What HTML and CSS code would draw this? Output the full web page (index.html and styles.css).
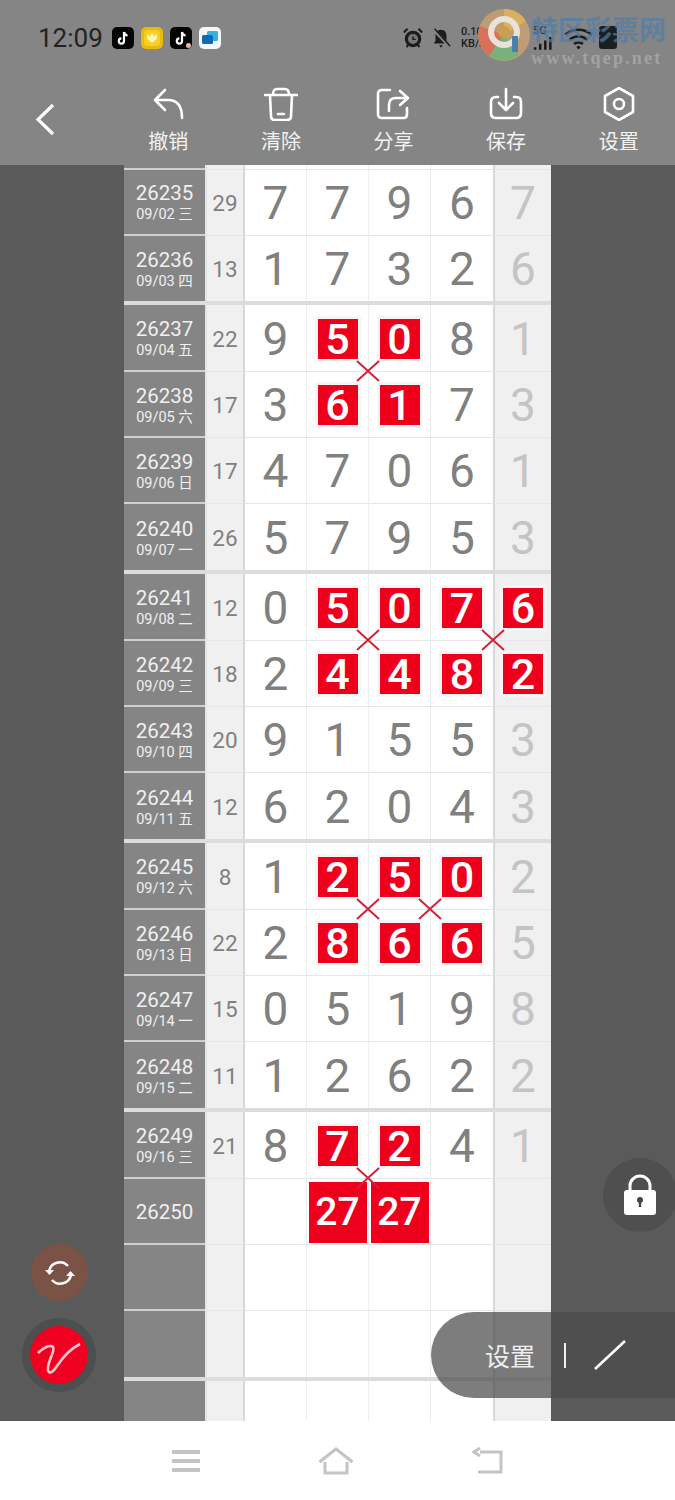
FILE: index.html
```html
<!DOCTYPE html>
<html lang="zh-CN">
<head>
    <meta charset="UTF-8">
    <meta name="viewport" content="width=device-width, initial-scale=1.0">
    <title>排列五</title>
    <link rel="stylesheet" href="styles.css">
</head>
<body>
    <header class="top">
        <div class="status">
            <span class="time">12:09</span>
            <div class="apps">
                <svg class="app" viewBox="0 0 22 22"><rect width="22" height="22" rx="5" fill="#050505"/><path d="M12 5v9a2.600 2.600 0 1 1-2.600-2.600M12 5c.3 2 1.600 3.300 3.600 3.500" fill="none" stroke="#fff" stroke-width="2.200"/></svg>
                <svg class="app" viewBox="0 0 22 22"><rect width="22" height="22" rx="5" fill="#e8b90f"/><rect x="3" y="3" width="16" height="16" rx="4" fill="#f5d020"/><path d="M6 7l2.500 2L11 6l2.500 3L16 7v5l-5 4-5-4z" fill="#fff3b0"/></svg>
                <svg class="app" viewBox="0 0 22 22"><rect width="22" height="22" rx="5" fill="#050505"/><path d="M12 5v9a2.600 2.600 0 1 1-2.600-2.600M12 5c.3 2 1.600 3.300 3.600 3.500" fill="none" stroke="#fff" stroke-width="2.200"/><circle cx="18.500" cy="18.500" r="2.500" fill="#e8b8a0"/></svg>
                <svg class="app" viewBox="0 0 22 22"><rect width="22" height="22" rx="5" fill="#f4f8fa"/><rect x="8" y="4" width="11" height="10" rx="1.500" fill="#36b0e0"/><rect x="3" y="8" width="11" height="9" rx="1.500" fill="#1268b8"/></svg>
            </div>
            <div class="sys">
                <svg class="sys-icon" viewBox="0 0 24 24"><circle cx="12" cy="13" r="9" fill="#1c1c1c"/><circle cx="12" cy="13" r="5.500" fill="#777"/><path d="M12 10v3.500h3" fill="none" stroke="#1c1c1c" stroke-width="1.600"/><path d="M2 6l4-4M22 6l-4-4M5 22l2-3M19 22l-2-3" stroke="#1c1c1c" stroke-width="2.200"/></svg>
                <svg class="sys-icon" viewBox="0 0 24 24"><path d="M12 3c-4 0-6 3-6 7v5l-2 3h16l-2-3v-5c0-4-2-7-6-7zM10 20h4l-2 2.500z" fill="#1c1c1c"/><path d="M4 3l17 18" stroke="#858585" stroke-width="3.500"/><path d="M5 2l17 19" stroke="#1c1c1c" stroke-width="1.500"/></svg>
                <div class="speed"><span>0.10</span><span>KB/s</span></div>
                <div class="signal">
                    <span class="fiveg">5G</span>
                    <svg class="bars" viewBox="0 0 26 16"><path d="M1 13h3v3H1zM7 9h3v7H7zM13 5h3v11h-3zM19 1h3v15h-3z" fill="#1c1c1c"/></svg>
                </div>
                <svg class="wifi" viewBox="0 0 26 20"><path d="M1 7c7-6 17-6 24 0M5 11.500c5-4 11-4 16 0M9 15.500c2.500-2 5.500-2 8 0" fill="none" stroke="#1c1c1c" stroke-width="2.400"/><circle cx="13" cy="18.500" r="1.500" fill="#1c1c1c"/></svg>
                <span class="battery"></span>
            </div>
        </div>
        <nav class="tools">
            <a class="back">
                <svg viewBox="0 0 24 36" width="24" height="36"><path d="M20 3L5 17.500 20 32" fill="none" stroke="#fff" stroke-width="3.200"/></svg>
            </a>
            <a class="tool">
                <svg viewBox="0 0 34 34"><path d="M14 3L4 13l10 10M4 13h13q14 0 14 18"/></svg>
                <span>撤销</span>
            </a>
            <a class="tool">
                <svg viewBox="0 0 34 34"><path d="M1 8h32M9 8q0-6 4-6h8q4 0 4 6M6 8l1 21q0 4 4 4h12q4 0 4-4l1-21M14 27h6"/></svg>
                <span>清除</span>
            </a>
            <a class="tool">
                <svg viewBox="0 0 34 34"><path d="M14 3H6Q2 3 2 7v20q0 4 4 4h22q3 0 3-4v-6M13 24v-6q0-7 7-7h11M24 4l8 7-8 7"/></svg>
                <span>分享</span>
            </a>
            <a class="tool">
                <svg viewBox="0 0 34 34"><path d="M9 10H7q-5 0-5 5v11q0 5 5 5h20q5 0 5-5V15q0-5-5-5h-2M17 2v20M10 16l7 7 7-7"/></svg>
                <span>保存</span>
            </a>
            <a class="tool">
                <svg viewBox="0 0 34 34"><path d="M17 1l14 8v16l-14 8-14-8V9z"/><circle cx="17" cy="17" r="5"/></svg>
                <span>设置</span>
            </a>
        </nav>
        <div class="watermark">
            <svg class="wm-logo" viewBox="0 0 54 54"><circle cx="27" cy="27" r="26" fill="#c9a070" opacity=".85"/><path d="M27 1a26 26 0 0 1 22 12L27 27z" fill="#d9b060"/><path d="M3 18a26 26 0 0 0 9 30l15-21z" fill="#d8705a"/><path d="M12 48a26 26 0 0 0 30-1L27 27z" fill="#7ab07a"/><circle cx="27" cy="24" r="13" fill="none" stroke="#e8e2d8" stroke-width="6"/><circle cx="27" cy="24" r="6" fill="#c8a050"/><path d="M38 28v16" stroke="#4a80b0" stroke-width="6"/></svg>
            <div class="wm-text">
                <span class="wm-name">特区彩票网</span>
                <span class="wm-url">www.tqep.net</span>
            </div>
        </div>
    </header>

    <main class="stage">
        <div class="sheet">
            <div class="row row-stub"><div class="c-date"></div><div class="c-sum"></div><div class="c"></div><div class="c"></div><div class="c"></div><div class="c"></div><div class="c-last"></div></div>

            <section class="group group-first">
                <div class="row"><div class="c-date"><b>26235</b><small>09/02 三</small></div><div class="c-sum">29</div><div class="c">7</div><div class="c">7</div><div class="c">9</div><div class="c">6</div><div class="c-last">7</div></div>
                <div class="row"><div class="c-date"><b>26236</b><small>09/03 四</small></div><div class="c-sum">13</div><div class="c">1</div><div class="c">7</div><div class="c">3</div><div class="c">2</div><div class="c-last">6</div></div>
            </section>

            <section class="group">
                <div class="row"><div class="c-date"><b>26237</b><small>09/04 五</small></div><div class="c-sum">22</div><div class="c">9</div><div class="c"><i class="hit">5</i><svg class="cross" viewBox="0 0 24 22"><path d="M1 1l22 20M23 1L1 21"/></svg></div><div class="c"><i class="hit">0</i></div><div class="c">8</div><div class="c-last">1</div></div>
                <div class="row"><div class="c-date"><b>26238</b><small>09/05 六</small></div><div class="c-sum">17</div><div class="c">3</div><div class="c"><i class="hit">6</i></div><div class="c"><i class="hit">1</i></div><div class="c">7</div><div class="c-last">3</div></div>
                <div class="row"><div class="c-date"><b>26239</b><small>09/06 日</small></div><div class="c-sum">17</div><div class="c">4</div><div class="c">7</div><div class="c">0</div><div class="c">6</div><div class="c-last">1</div></div>
                <div class="row"><div class="c-date"><b>26240</b><small>09/07 一</small></div><div class="c-sum">26</div><div class="c">5</div><div class="c">7</div><div class="c">9</div><div class="c">5</div><div class="c-last">3</div></div>
            </section>

            <section class="group">
                <div class="row"><div class="c-date"><b>26241</b><small>09/08 二</small></div><div class="c-sum">12</div><div class="c">0</div><div class="c"><i class="hit">5</i><svg class="cross" viewBox="0 0 24 22"><path d="M1 1l22 20M23 1L1 21"/></svg></div><div class="c"><i class="hit">0</i></div><div class="c"><i class="hit">7</i><svg class="cross" viewBox="0 0 24 22"><path d="M1 1l22 20M23 1L1 21"/></svg></div><div class="c-last"><i class="hit">6</i></div></div>
                <div class="row"><div class="c-date"><b>26242</b><small>09/09 三</small></div><div class="c-sum">18</div><div class="c">2</div><div class="c"><i class="hit">4</i></div><div class="c"><i class="hit">4</i></div><div class="c"><i class="hit">8</i></div><div class="c-last"><i class="hit">2</i></div></div>
                <div class="row"><div class="c-date"><b>26243</b><small>09/10 四</small></div><div class="c-sum">20</div><div class="c">9</div><div class="c">1</div><div class="c">5</div><div class="c">5</div><div class="c-last">3</div></div>
                <div class="row"><div class="c-date"><b>26244</b><small>09/11 五</small></div><div class="c-sum">12</div><div class="c">6</div><div class="c">2</div><div class="c">0</div><div class="c">4</div><div class="c-last">3</div></div>
            </section>

            <section class="group">
                <div class="row"><div class="c-date"><b>26245</b><small>09/12 六</small></div><div class="c-sum">8</div><div class="c">1</div><div class="c"><i class="hit">2</i><svg class="cross" viewBox="0 0 24 22"><path d="M1 1l22 20M23 1L1 21"/></svg></div><div class="c"><i class="hit">5</i><svg class="cross" viewBox="0 0 24 22"><path d="M1 1l22 20M23 1L1 21"/></svg></div><div class="c"><i class="hit">0</i></div><div class="c-last">2</div></div>
                <div class="row"><div class="c-date"><b>26246</b><small>09/13 日</small></div><div class="c-sum">22</div><div class="c">2</div><div class="c"><i class="hit">8</i></div><div class="c"><i class="hit">6</i></div><div class="c"><i class="hit">6</i></div><div class="c-last">5</div></div>
                <div class="row"><div class="c-date"><b>26247</b><small>09/14 一</small></div><div class="c-sum">15</div><div class="c">0</div><div class="c">5</div><div class="c">1</div><div class="c">9</div><div class="c-last">8</div></div>
                <div class="row"><div class="c-date"><b>26248</b><small>09/15 二</small></div><div class="c-sum">11</div><div class="c">1</div><div class="c">2</div><div class="c">6</div><div class="c">2</div><div class="c-last">2</div></div>
            </section>

            <section class="group">
                <div class="row"><div class="c-date"><b>26249</b><small>09/16 三</small></div><div class="c-sum">21</div><div class="c">8</div><div class="c"><i class="hit">7</i><svg class="cross" viewBox="0 0 24 22"><path d="M1 1l22 20M23 1L1 21"/></svg></div><div class="c"><i class="hit">2</i></div><div class="c">4</div><div class="c-last">1</div></div>
                <div class="row"><div class="c-date"><b>26250</b></div><div class="c-sum"></div><div class="c"></div><div class="c"><i class="pick">27</i></div><div class="c"><i class="pick">27</i></div><div class="c"></div><div class="c-last"></div></div>
                <div class="row"><div class="c-date"></div><div class="c-sum"></div><div class="c"></div><div class="c"></div><div class="c"></div><div class="c"></div><div class="c-last"></div></div>
                <div class="row"><div class="c-date"></div><div class="c-sum"></div><div class="c"></div><div class="c"></div><div class="c"></div><div class="c"></div><div class="c-last"></div></div>
            </section>

            <section class="group">
                <div class="row"><div class="c-date"></div><div class="c-sum"></div><div class="c"></div><div class="c"></div><div class="c"></div><div class="c"></div><div class="c-last"></div></div>
            </section>
        </div>

        <button class="fab fab-refresh">
            <svg viewBox="0 0 32 32" width="32" height="32"><path d="M5 14a11 11 0 0 1 19-5M27 18a11 11 0 0 1-19 5" fill="none" stroke="#fff" stroke-width="2.600"/><path d="M1 13h9l-4.500 5zM31 19h-9l4.500-5z" fill="#fff"/></svg>
        </button>
        <button class="fab fab-pen">
            <svg viewBox="0 0 58 58" width="58" height="58"><path d="M8 27c5-5 12-9 15-6 3 4-6 14-5 23 1 5 5 2 9-4 6-9 13-17 23-22" fill="none" stroke="#ffc4cc" stroke-width="2.600"/></svg>
        </button>
        <button class="fab fab-lock">
            <svg viewBox="0 0 34 42" width="34" height="42"><path d="M7 19v-7a10 10 0 0 1 20 0v7" fill="none" stroke="#fff" stroke-width="3"/><rect x="1" y="16" width="32" height="25" rx="3" fill="#fff"/><circle cx="17" cy="26" r="3" fill="#444"/><rect x="15.800" y="27" width="2.400" height="6" fill="#444"/></svg>
        </button>
        <div class="pen-bar">
            <span class="pen-label">设置</span>
            <span class="pen-div"></span>
            <svg class="pen-line" viewBox="0 0 34 32" width="34" height="32"><path d="M2 30L32 2" stroke="#fff" stroke-width="2.600"/></svg>
        </div>
    </main>

    <footer class="sysnav">
        <span class="menu"><i></i><i></i><i></i></span>
        <svg viewBox="0 0 36 28" width="36" height="28"><path d="M1.500 15L18 2l16.500 13M7 15v11h22V15" fill="none" stroke="#c4c4c4" stroke-width="3"/></svg>
        <svg viewBox="0 0 32 28" width="32" height="28"><path d="M8 5h21v20H6M8 1L2 5l6 4" fill="none" stroke="#c4c4c4" stroke-width="3"/></svg>
    </footer>
</body>
</html>
```
FILE: styles.css
```css
* {
    box-sizing: border-box;
}
html, body {
    margin: 0;
    height: 1500px;
    overflow: hidden;
}
body {
    font-family: Roboto, "Noto Sans CJK SC", sans-serif;
    background-color: #fff;
    color: #808080;
}

/* top */
.top {
    position: relative;
    height: 165px;
    background-color: #858585;
}
.status {
    display: flex;
    align-items: center;
    height: 75px;
    padding: 0 0 0 38px;
}
.time {
    font-size: 26px;
    color: #222;
    width: 74px;
}
.apps {
    display: flex;
    gap: 7px;
}
.app {
    width: 22px;
    height: 22px;
}
.sys {
    display: flex;
    align-items: center;
    margin-left: auto;
    padding-right: 58px;
}
.sys-icon {
    width: 22px;
    height: 22px;
    margin-right: 6px;
}
.sys-icon + .speed {
    margin-left: 3px;
}
.speed {
    display: flex;
    flex-direction: column;
    width: 72px;
    font-size: 11px;
    font-weight: 500;
    line-height: 12px;
    color: #1c1c1c;
}
.signal {
    display: flex;
    flex-direction: column;
    width: 25px;
}
.fiveg {
    font-size: 11px;
    line-height: 11px;
    font-weight: 500;
    color: #333;
}
.bars {
    width: 22px;
    height: 14px;
}
.wifi {
    width: 29px;
    height: 22px;
    margin-left: 6px;
}
.battery {
    width: 18px;
    height: 23px;
    margin-left: 6px;
    border-radius: 3px;
    background-color: #1a1f22;
}
.tools {
    display: flex;
    height: 90px;
}
.back {
    width: 112px;
    padding: 27px 0 0 33px;
}
.tool {
    flex: 1;
    display: flex;
    flex-direction: column;
    align-items: center;
    padding-top: 12px;
    color: #f2f2f2;
    font-size: 20px;
    line-height: 30px;
}
.tool svg {
    width: 34px;
    height: 34px;
    margin-bottom: 6px;
    fill: none;
    stroke: #fff;
    stroke-width: 2.600;
    stroke-linejoin: round;
    stroke-linecap: round;
}
.watermark {
    position: absolute;
    top: 8px;
    left: 477px;
    display: flex;
    gap: 0;
}
.wm-logo {
    width: 54px;
    height: 54px;
}
.wm-text {
    display: flex;
    flex-direction: column;
    padding-top: 7px;
}
.wm-name {
    font-size: 27px;
    line-height: 32px;
    font-weight: 700;
    color: #4f7ea8;
    opacity: .7;
}
.wm-url {
    font-family: "Liberation Serif", serif;
    font-size: 18px;
    line-height: 22px;
    letter-spacing: 2.200px;
    font-weight: 700;
    color: #a2a2a2;
}

/* sheet */
.stage {
    position: relative;
    height: 1256px;
    overflow: hidden;
    background-color: #5a5a5a;
}
.sheet {
    width: 427px;
    margin-left: 124px;
}
.row {
    display: grid;
    grid-template-columns: 81px 40px 62px 62px 62px 62px 58px;
    height: 66px;
}
.row:first-child {
    height: 67px;
}
.row-stub, .row-stub:first-child {
    height: 5px;
}
.group {
    border-top: 4px solid #dcdcdc;
}
.group-first {
    border-top: 0;
}
.group-first .row {
    height: 65.500px;
}
.c-date, .c-sum, .c, .c-last {
    display: flex;
    align-items: center;
    justify-content: center;
    position: relative;
    border-bottom: 1px solid #e6e6e6;
}
.row:last-child > div {
    border-bottom: 0;
}
.c-date {
    flex-direction: column;
    background-color: #858585;
    color: #f0f0f0;
    border-bottom: 2px solid #cfcfcf;
    padding-top: 2px;
}
.c-date b {
    font-size: 20.500px;
    font-weight: 400;
    line-height: 25px;
}
.c-date small {
    font-size: 14.500px;
    line-height: 18px;
}
.c-sum {
    background-color: #f0f0f0;
    border-left: 2px solid #e4e4e4;
    border-right: 2px solid #d8d8d8;
    font-size: 22.500px;
    padding-top: 1px;
}
.c {
    background-color: #fff;
    border-right: 1px solid #eeeeee;
    font-size: 46px;
    padding-top: 1px;
}
.c:nth-child(6) {
    border-right: 0;
}
.c-last {
    background-color: #f0f0f0;
    border-left: 2px solid #d8d8d8;
    color: #c4c4c4;
    font-size: 46px;
    padding-top: 1px;
}
.hit {
    display: flex;
    align-items: center;
    justify-content: center;
    width: 40px;
    height: 40px;
    background-color: #ee001c;
    box-shadow: 0 0 0 3px #f6f6f6;
    color: #fff;
    font-size: 43px;
    font-style: normal;
    font-weight: 500;
}
.pick {
    display: flex;
    align-items: center;
    justify-content: center;
    width: 58px;
    height: 61px;
    background-color: #ee001c;
    color: #fff;
    font-size: 39px;
    font-style: normal;
    font-weight: 500;
}
.cross {
    position: absolute;
    right: -12px;
    bottom: -11px;
    z-index: 2;
    width: 24px;
    height: 22px;
    fill: none;
    stroke: #d0233a;
    stroke-width: 2;
}

/* floating buttons */
.fab {
    position: absolute;
    display: flex;
    align-items: center;
    justify-content: center;
    padding: 0;
    border: 0;
    border-radius: 50%;
}
.fab-refresh {
    left: 31px;
    top: 1079px;
    width: 57px;
    height: 57px;
    background-color: #7a5246;
}
.fab-pen {
    left: 30px;
    top: 1161px;
    width: 58px;
    height: 58px;
    background-color: #f00020;
    box-shadow: 0 0 0 8px #4b4f4f;
}
.fab-lock {
    left: 603px;
    top: 993px;
    width: 74px;
    height: 74px;
    background-color: #4f4f4f;
}
.pen-bar {
    position: absolute;
    left: 431px;
    top: 1147px;
    display: flex;
    align-items: center;
    width: 244px;
    height: 86px;
    padding-left: 54px;
    border-radius: 43px 0 0 43px;
    background: linear-gradient(to right, rgba(70, 70, 70, .7) 120px, rgba(0, 0, 0, .12) 120px);
}
.pen-label {
    font-size: 25px;
    color: #eee;
}
.pen-div {
    width: 2px;
    height: 25px;
    margin-left: 29px;
    background-color: #f0f0f0;
}
.pen-line {
    margin-left: 27px;
}

/* android nav */
.sysnav {
    display: flex;
    align-items: center;
    justify-content: center;
    gap: 118px;
    height: 79px;
    background-color: #fff;
}
.menu {
    display: flex;
    flex-direction: column;
    gap: 5px;
    width: 28px;
}
.menu i {
    height: 4px;
    background-color: #c4c4c4;
}
```
